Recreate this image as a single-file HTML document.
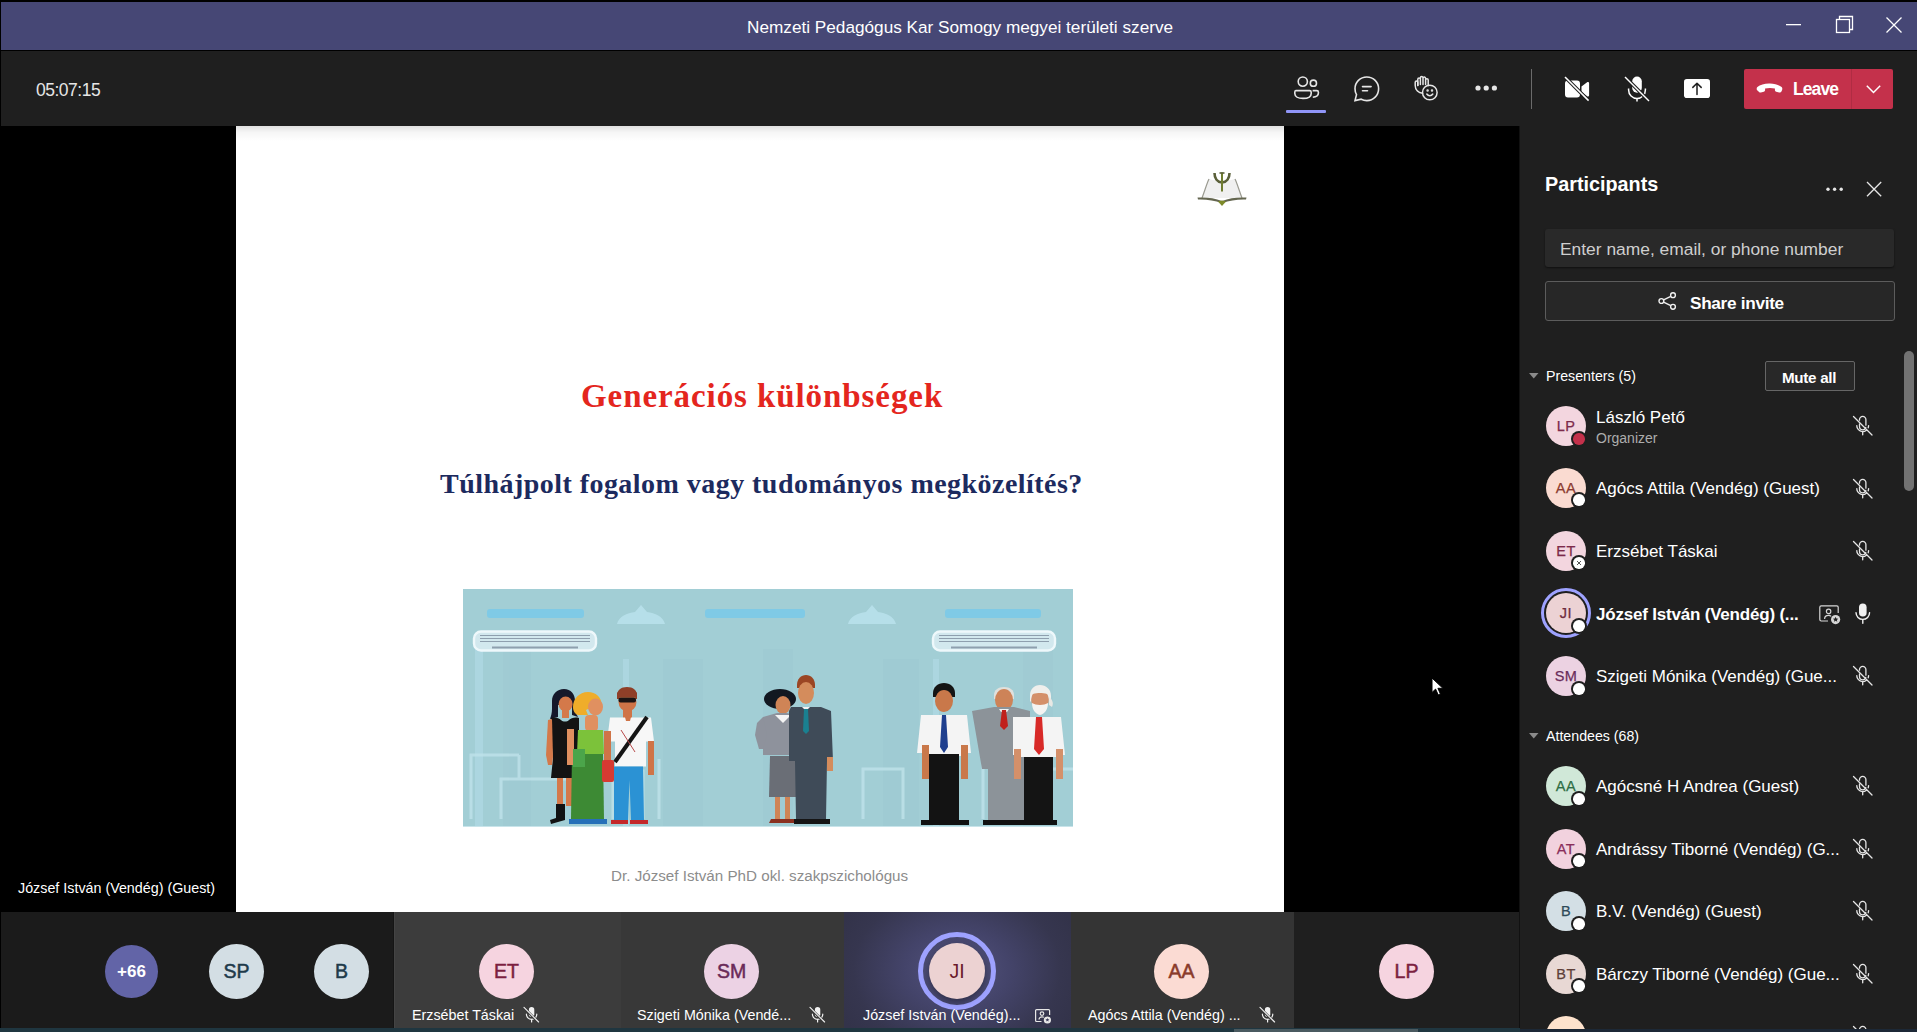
<!DOCTYPE html>
<html><head><meta charset="utf-8">
<style>
*{margin:0;padding:0;box-sizing:border-box}
html,body{width:1917px;height:1032px;overflow:hidden;background:#000;font-family:"Liberation Sans",sans-serif;color:#fff}
.a{position:absolute}
.t{position:absolute;white-space:nowrap;line-height:1}
svg{position:absolute;overflow:visible}
#title{left:1px;top:2px;width:1916px;height:48px;background:#464775}
#tool{left:1px;top:51px;width:1916px;height:75px;background:#1f1f1f}
#video{left:1px;top:126px;width:1518px;height:786px;background:#000}
#slide{left:236px;top:126px;width:1048px;height:786px;background:#fff}
#panel{left:1520px;top:126px;width:397px;height:906px;background:#1f1f1f}
#gallery{left:1px;top:912px;width:1518px;height:116px;background:#1b1b1b}
.av{position:absolute;border-radius:50%;text-align:center;line-height:1}
.pav{width:40px;height:40px;font-size:14.5px;line-height:40px;letter-spacing:0.5px;-webkit-text-stroke:0.25px currentColor}
.st{position:absolute;width:16px;height:16px;border-radius:50%;background:#1f1f1f;margin:-1px 0 0 -1px}
.st i{position:absolute;left:2.2px;top:2.2px;width:11.6px;height:11.6px;border-radius:50%;background:#fff}
.nm{font-size:17px;color:#fff}
.gav{width:55px;height:55px;line-height:55px;font-size:19.5px;-webkit-text-stroke:0.5px currentColor}
.gnm{font-size:14.3px;color:#fff}
</style></head><body>
<!-- title bar -->
<div id="title" class="a"></div>
<div class="t" style="left:747px;top:19px;font-size:17.2px;color:#fff">Nemzeti Pedagógus Kar Somogy megyei területi szerve</div>
<svg style="left:1786px;top:24px" width="16" height="2"><rect x="0" y="0" width="15" height="1.3" fill="#fff"/></svg>
<svg style="left:1835px;top:15px" width="20" height="20" fill="none" stroke="#fff" stroke-width="1.3"><rect x="1.5" y="4.5" width="13" height="13"/><path d="M4.5 4.5V1.5H17.5V14.5H14.5"/></svg>
<svg style="left:1886px;top:17px" width="16" height="16" stroke="#fff" stroke-width="1.3"><path d="M.5 .5L15.5 15.5M15.5 .5L.5 15.5"/></svg>

<!-- toolbar -->
<div id="tool" class="a"></div>
<div class="t" style="left:36px;top:82px;font-size:17.5px;color:#e6e6e6;letter-spacing:-0.5px">05:07:15</div>
<!-- people -->
<svg style="left:1294px;top:76px" width="26" height="24" fill="none" stroke="#e6e6e6" stroke-width="1.6">
 <circle cx="8.8" cy="5.6" r="4.6"/><circle cx="19.4" cy="7.2" r="3.1"/>
 <path d="M2 14.6h13.6a1.6 1.6 0 0 1 1.6 1.6v1.2c0 3-3.2 5-8.2 5s-8.2-2-8.2-5v-1.2a1.6 1.6 0 0 1 1.2-1.6z"/>
 <path d="M18.6 14.6h4.2a1.6 1.6 0 0 1 1.6 1.6v.8c0 2.4-2.4 4-5.6 4.2"/>
</svg>
<div class="a" style="left:1286px;top:110px;width:40px;height:2.5px;background:#9095f7;border-radius:1px"></div>
<!-- chat -->
<svg style="left:1354px;top:76px" width="26" height="26" fill="none" stroke="#e6e6e6" stroke-width="1.6">
 <path d="M12.8 1C19.4 1 24.6 6.2 24.6 12.8S19.4 24.6 12.8 24.6c-2 0-3.9-.5-5.6-1.4L1 24.6l1.5-5.9C1.5 17 1 15 1 12.8 1 6.2 6.2 1 12.8 1z"/>
 <path d="M8.5 10.6h8.6M8.5 14.8h5" stroke-linecap="round"/>
</svg>
<!-- raise hand / react -->
<svg style="left:1414px;top:76px" width="26" height="26" fill="none" stroke="#e6e6e6" stroke-width="1.5" stroke-linecap="round" stroke-linejoin="round">
 <path d="M8.6 17.2C4.6 16.8 1.2 14 1.2 9.6V6.4a1.3 1.3 0 0 1 2.6 0v3"/>
 <path d="M3.8 9.4V3.2a1.3 1.3 0 0 1 2.6 0v5.2V1.9a1.3 1.3 0 0 1 2.6 0v6.5V2.4a1.3 1.3 0 0 1 2.6 0v6V4a1.3 1.3 0 0 1 2.6 0v5.6"/>
 <circle cx="15.8" cy="16.5" r="7.3"/>
 <path d="M12.8 18c.8 1.2 1.8 1.8 3 1.8s2.2-.6 3-1.8"/>
 <circle cx="13.6" cy="14.6" r=".5" fill="#e6e6e6"/><circle cx="18" cy="14.6" r=".5" fill="#e6e6e6"/>
</svg>
<!-- more -->
<svg style="left:1475px;top:85px" width="24" height="6" fill="#e6e6e6"><circle cx="3" cy="3" r="2.6"/><circle cx="11.2" cy="3" r="2.6"/><circle cx="19.4" cy="3" r="2.6"/></svg>
<div class="a" style="left:1531px;top:69px;width:1px;height:40px;background:#6b6b6b"></div>
<!-- camera off -->
<svg style="left:1564px;top:76px" width="27" height="26">
 <path d="M1 7.5a3 3 0 0 1 3-3h9a3 3 0 0 1 3 3v11a3 3 0 0 1-3 3H4a3 3 0 0 1-3-3z" fill="#fff"/>
 <path d="M17.5 10.5l5.6-4.2c.8-.6 2-.1 2 1v12c0 1.1-1.2 1.6-2 1L17.5 16z" fill="#fff"/>
 <path d="M.8 .8L24.4 24.4" stroke="#1f1f1f" stroke-width="3.6"/>
 <path d="M1 1L24.6 24.6" stroke="#fff" stroke-width="1.5"/>
</svg>
<!-- mic off -->
<svg style="left:1624px;top:76px" width="27" height="26">
 <rect x="8.2" y=".5" width="9.6" height="16.2" rx="4.8" fill="#fff"/>
 <path d="M4.6 12.5v1.6a8.4 8.4 0 0 0 16.8 0v-1.6" fill="none" stroke="#fff" stroke-width="1.5"/>
 <path d="M13 22.4v3.2" stroke="#fff" stroke-width="1.5"/>
 <path d="M.8 .8L24.8 24.8" stroke="#1f1f1f" stroke-width="3.6"/>
 <path d="M1 1L25 25" stroke="#fff" stroke-width="1.5"/>
</svg>
<!-- share -->
<svg style="left:1684px;top:79px" width="26" height="20">
 <rect x="0" y="0" width="26" height="19" rx="2.8" fill="#fff"/>
 <path d="M13 15.4V4.4M8.8 8.4L13 4.2l4.2 4.2" fill="none" stroke="#1f1f1f" stroke-width="1.5" stroke-linecap="round" stroke-linejoin="round"/>
</svg>
<!-- leave -->
<div class="a" style="left:1744px;top:69px;width:149px;height:40px;background:#c4314b;border-radius:2px"></div>
<div class="a" style="left:1851px;top:69px;width:1px;height:40px;background:#b02c43"></div>
<svg style="left:1757px;top:83px" width="26" height="11">
 <path d="M13 .5c4.6 0 9 1.4 11.6 3.6.8.7.9 1.8.5 2.8l-.7 1.5c-.4.9-1.4 1.3-2.3 1.1l-2.9-.7c-.8-.2-1.3-.9-1.3-1.7V5.6c-1.6-.5-3.2-.7-4.9-.7s-3.3.2-4.9.7v1.5c0 .8-.5 1.5-1.3 1.7l-2.9.7c-.9.2-1.9-.2-2.3-1.1L-.1 6.9c-.4-1-.3-2.1.5-2.8C3 1.9 7.4.5 12 .5z" fill="#fff"/>
</svg>
<div class="t" style="left:1793px;top:81px;font-size:17.5px;font-weight:bold;color:#fff;letter-spacing:-0.9px">Leave</div>
<svg style="left:1866px;top:85px" width="15" height="9" fill="none" stroke="#fff" stroke-width="1.5"><path d="M.8 .8L7.5 7.5L14.2 .8"/></svg>

<!-- video stage -->
<div id="video" class="a"></div>
<div id="slide" class="a"></div>
<div class="a" style="left:236px;top:126px;width:1048px;height:15px;background:linear-gradient(rgba(0,0,0,.12),rgba(0,0,0,.04) 40%,rgba(0,0,0,0))"></div>
<div class="a" style="left:1520px;top:126px;width:397px;height:3px;background:#1b1b1b"></div>
<!-- logo -->
<svg style="left:1196px;top:168px" width="52" height="42">
 <path d="M6 30C9 22 11 15 13 11c4 1 8 2 13 2s9-1 13-2c2 4 4 11 7 19z" fill="#f0f0f0"/>
 <path d="M6 30C9 22 11 15 13 11" fill="none" stroke="#9a9a90" stroke-width="1.2"/>
 <path d="M46 30C43 22 41 15 39 11" fill="none" stroke="#9a9a90" stroke-width="1.2"/>
 <path d="M1.5 29.5c9-.5 17 .5 24.5 3.5 7.5-3 15.5-4 24.5-3.5l-.5 2c-8.5-.3-16 .8-24 3.8-8-3-15.5-4.1-24-3.8z" fill="#646650"/>
 <path d="M22 33.5l4 4.5 4-4.5-4-1z" fill="#7d8a2a"/>
 <path d="M18.5 5c0 5 2.5 9 7.5 9.5M33.5 5c0 5-2.5 9-7.5 9.5" fill="none" stroke="#5b603a" stroke-width="2.6"/>
 <path d="M26 4.5v19" fill="none" stroke="#6f7d30" stroke-width="2"/>
 <path d="M23.5 5h5" fill="none" stroke="#5b603a" stroke-width="1.6"/>
</svg>
<div class="t" style="left:581px;top:380px;font-family:'Liberation Serif',serif;font-weight:bold;font-size:33px;color:#e4261e;letter-spacing:0.92px">Generációs különbségek</div>
<div class="t" style="left:440px;top:470px;font-family:'Liberation Serif',serif;font-weight:bold;font-size:28px;color:#1c2a5e;letter-spacing:0.46px">Túlhájpolt fogalom vagy tudományos megközelítés?</div>
<div class="t" style="left:611px;top:868px;font-size:15.2px;color:#8c8c8c">Dr. József István PhD okl. szakpszichológus</div>
<!-- illustration -->
<svg style="left:463px;top:589px" width="610" height="238">
 <rect x="0" y="0" width="610" height="238" fill="#a2ced5"/>
 <g fill="#9ecad2" opacity=".6"><rect x="40" y="60" width="28" height="178"/><rect x="200" y="70" width="40" height="168"/><rect x="300" y="60" width="30" height="178"/><rect x="420" y="70" width="36" height="168"/><rect x="560" y="60" width="30" height="178"/></g>
 <g fill="#acd6e0"><rect x="12" y="60" width="8" height="178"/><rect x="160" y="70" width="6" height="168"/><rect x="470" y="70" width="6" height="168"/></g>
 <g fill="#7fcae6"><rect x="24" y="20" width="97" height="9" rx="3"/><rect x="242" y="20" width="100" height="9" rx="3"/><rect x="482" y="20" width="96" height="9" rx="3"/></g>
 <g fill="#b6dfe9"><path d="M154 35c2-8 10-11 18-12l6-7 6 7c8 1 16 4 18 12z"/><path d="M385 35c2-8 10-11 18-12l6-7 6 7c8 1 16 4 18 12z"/></g>
 <g fill="#d2e8ee" stroke="#eef8fb" stroke-width="2.4"><rect x="11" y="42.5" width="122" height="19" rx="7"/><rect x="470" y="42.5" width="122" height="19" rx="7"/></g>
 <g stroke="#8e9fae" stroke-width="1.2"><path d="M17 46.5h110M17 49.5h110M17 52.5h110M476 46.5h110M476 49.5h110M476 52.5h110"/></g>
 <g stroke="#8e9fae" stroke-width="2"><path d="M29 58.5h86M488 58.5h86"/></g>
 <!-- chairs -->
 <g fill="none" stroke="#bfe2ea" stroke-width="3" opacity=".8">
  <path d="M8 230v-64h48M38 230v-40h80v40M56 166v24M120 230v-56"/>
  <path d="M150 230v-48h30v48M196 230v-60"/>
  <path d="M400 230v-50h40v50M520 230v-60h50v60M590 180h20"/>
 </g>
 <!-- group 1 -->
 <g>
  <!-- woman black dress -->
  <path d="M101 100c-7 0-12 5-12 12v8c0 4-1 7-2 10l8-2V116h14v10l6 2c-2-3-3-7-3-11v-5c0-7-4-12-11-12z" fill="#15182a"/>
  <ellipse cx="102.6" cy="115" rx="7" ry="7.5" fill="#d4794a"/>
  <rect x="99" y="121" width="7" height="8" fill="#d4794a"/>
  <path d="M88 129c4-1 8 0 10 2 2 2 6 2 8 0 2-2 6-3 10-2l0 20 -2 20 2 20H88l2-20-2-20z" fill="#131313"/>
  <path d="M85 131l4-1 1 38-1 8h-4l-2-10z" fill="#d4794a"/>
  <rect x="94" y="189" width="6" height="28" fill="#d4794a"/><rect x="103" y="189" width="6" height="28" fill="#d4794a"/>
  <path d="M93 215h9v16l-14 4-1-4 6-2z" fill="#121212"/>
  <!-- woman blonde -->
  <path d="M125 103c-9 0-15 7-15 15 0 4 2 7 5 8h10l-2-5c3-2 11-2 13-1l3-4c-1-8-6-13-14-13z" fill="#efad2a"/>
  <ellipse cx="132.5" cy="118" rx="7.5" ry="8.5" fill="#e09060"/>
  <rect x="122" y="126" width="13" height="16" rx="4" fill="#e09060"/>
  <path d="M115 141h25l1 24h-27z" fill="#7cc23a"/>
  <path d="M109 165h31l1 65h-33z" fill="#3d8a34"/>
  <path d="M106 230h38v5h-38z" fill="#2670b8"/>
  <rect x="104" y="140" width="7" height="36" fill="#e09060"/>
  <rect x="110" y="160" width="12" height="18" fill="#4ba54a"/>
  <!-- man sunglasses -->
  <path d="M154 107c0-6 4-9 10-9s10 3 10 9v3h-20z" fill="#8f3f28"/>
  <ellipse cx="164.5" cy="113" rx="9" ry="9.5" fill="#cf7447"/>
  <path d="M154 104c2-3 6-4 10-4s8 1 10 4v4h-20z" fill="#8f3f28"/>
  <rect x="155.5" y="108.5" width="17.5" height="5" rx="2" fill="#1c1414"/>
  <rect x="160" y="121" width="9" height="8" fill="#cf7447"/>
  <path d="M147 128.5h41l3 24h-8v25h-31v-25h-8z" fill="#f7f7f7"/>
  <path d="M162 128h6l-1 4h-4z" fill="#cf7447"/>
  <path d="M184 128l-32 45" stroke="#151515" stroke-width="4"/>
  <path d="M158 141l14 22" stroke="#b84a4a" stroke-width="1"/>
  <rect x="141" y="142" width="7" height="34" fill="#cf7447"/><rect x="185" y="152" width="6" height="34" fill="#cf7447"/>
  <rect x="139" y="171" width="12" height="22" rx="2" fill="#d63a32"/>
  <path d="M151 177.5h29l1 53.5h-13l-1.5-40-1.5 40h-14z" fill="#2b92d4"/>
  <path d="M148 231h17v4h-17zM167 231h18v4h-18z" fill="#c4282a"/>
 </g>
 <!-- group 2 -->
 <g>
  <ellipse cx="317" cy="110" rx="16" ry="10" fill="#121821"/>
  <ellipse cx="320" cy="116" rx="7.5" ry="9" fill="#cf8456"/>
  <path d="M300 128l14-4h10l14 4 4 38h-42z" fill="#8e929c"/>
  <path d="M312 126l8 8 8-8z" fill="#f5f5f5"/>
  <path d="M294 134l6-6 4 18-4 14h-4l-4-14z" fill="#8e929c"/>
  <path d="M307 167h27l1 41h-29z" fill="#6a6e76"/>
  <rect x="312" y="208" width="5" height="22" fill="#cf8456"/><rect x="322" y="208" width="5" height="22" fill="#cf8456"/>
  <path d="M308 230h12v4h-14zM320 230h12v4h-12z" fill="#8a3020"/>
  <path d="M334 96c0-6 4-10 9-10s9 4 9 10v3h-18z" fill="#9b4624"/>
  <ellipse cx="343" cy="104" rx="8" ry="11" fill="#d48c5c"/>
  <path d="M328 118h30l10 4 2 50h-6l-1 58h-30l-1-58h-6l0-50z" fill="#3f4b58"/>
  <path d="M339 118h8l-4 4z" fill="#f2f2f2"/><path d="M341 120h4l1 22-3 3-3-3z" fill="#1a8090"/>
  <rect x="364" y="168" width="6" height="14" fill="#d48c5c"/>
  <path d="M331 230h36v5h-36z" fill="#151515"/>
 </g>
 <!-- group 3 -->
 <g>
  <path d="M470 104c0-6 5-10 11-10s11 4 11 10v4h-22z" fill="#141414"/>
  <ellipse cx="481" cy="112" rx="9" ry="11" fill="#c9784a"/>
  <path d="M458 126h46l4 38h-8v3h-38v-3h-8z" fill="#f4f4f4"/>
  <path d="M479 126h4l2 32-4 6-4-6z" fill="#1f3f8e"/>
  <rect x="459" y="156" width="7" height="34" fill="#c9784a"/><rect x="498" y="156" width="7" height="34" fill="#c9784a"/>
  <path d="M466 165h30v66h-30z" fill="#131313"/>
  <path d="M458 231h24v5h-24zM482 231h24v5h-24z" fill="#111"/>
  <path d="M531 106c0-5 4-8 10-8s10 3 10 8v4h-20z" fill="#e0e0dc"/>
  <ellipse cx="541" cy="111" rx="9" ry="11" fill="#cd8358"/>
  <path d="M509 122l22-4h20l16 4 0 58h-4v51h-38v-51h-6z" fill="#8c9399"/>
  <path d="M536 120h10l-2 3h-6z" fill="#f2f2f2"/><path d="M539 121h4l2 16-4 4-4-4z" fill="#c0201c"/>
  <path d="M520 231h42v5h-42z" fill="#111"/>
  <ellipse cx="577" cy="110" rx="9" ry="10.5" fill="#d4906a"/>
  <path d="M567 107c0-7 4-11 10-11s11 4 11 11v5l-2 1c0-4-1-7-2-8-2-1-5-1-7-1s-5 0-7 1c-1 1-2 4-2 8l-1-1z" fill="#efefec"/>
  <path d="M569 114c2 1 5 2 8 2s6-1 8-2c0 6-3 11-8 12-5-1-8-6-8-12z" fill="#f4f4f2"/>
  <path d="M586 108c3 2 5 6 3 10l-3-2z" fill="#e8e8e4"/>
  <path d="M550 128h48l4 38h-6v2h-38v-2h-8z" fill="#f4f4f4"/>
  <path d="M573 128h6l2 32-5 6-5-6z" fill="#d82a28"/>
  <rect x="551" y="160" width="7" height="30" fill="#d4906a"/><rect x="593" y="160" width="7" height="30" fill="#d4906a"/>
  <path d="M561 168h29v63h-29z" fill="#141414"/>
  <path d="M558 231h36v5h-36z" fill="#111"/>
 </g>
 <rect x="0" y="237" width="610" height="1" fill="#c8e4ea"/>
</svg>
<div class="t" style="left:18px;top:881px;font-size:14.3px;color:#fff">József István (Vendég) (Guest)</div>

<svg style="left:1431px;top:677px" width="14" height="20"><path d="M1 1v14.5l3.6-3.4 2.6 5.8 2.2-1-2.5-5.6h5z" fill="#fff" stroke="#000" stroke-width="1"/></svg>
<!-- panel -->
<div id="panel" class="a"></div>
<div class="a" style="left:1519px;top:126px;width:1px;height:906px;background:#111"></div>
<div class="t" style="left:1545px;top:175px;font-size:19.8px;font-weight:bold;color:#fff">Participants</div>
<svg style="left:1826px;top:187px" width="18" height="5" fill="#e6e6e6"><circle cx="2" cy="2.2" r="1.7"/><circle cx="8.6" cy="2.2" r="1.7"/><circle cx="15.2" cy="2.2" r="1.7"/></svg>
<svg style="left:1866px;top:181px" width="16" height="16" stroke="#e6e6e6" stroke-width="1.3"><path d="M1 1L15.2 15.2M15.2 1L1 15.2"/></svg>
<div class="a" style="left:1545px;top:229px;width:349px;height:38px;background:#292929;border-radius:3px;box-shadow:0 1px 2px rgba(0,0,0,.5)"></div>
<div class="t" style="left:1560px;top:241px;font-size:17.4px;color:#cfcfcf">Enter name, email, or phone number</div>
<div class="a" style="left:1545px;top:281px;width:350px;height:40px;background:#272727;border:1px solid #5c5c5c;border-radius:3px"></div>
<svg style="left:1658px;top:292px" width="19" height="18" fill="none" stroke="#f0f0f0" stroke-width="1.4"><circle cx="15" cy="3.2" r="2.4"/><circle cx="3.4" cy="9" r="2.4"/><circle cx="15" cy="14.8" r="2.4"/><path d="M5.6 7.9l7.2-3.6M5.6 10.1l7.2 3.6"/></svg>
<div class="t" style="left:1690px;top:295px;font-size:17.2px;font-weight:bold;color:#fff;letter-spacing:-0.3px">Share invite</div>
<!-- scrollbar -->
<div class="a" style="left:1904px;top:351px;width:10px;height:140px;background:#727272;border-radius:5px"></div>
<!-- presenters -->
<svg style="left:1529px;top:373px" width="10" height="6" fill="#8a8a8a"><path d="M0 0h9.5L4.75 5.5z"/></svg>
<div class="t" style="left:1546px;top:369px;font-size:14.2px;color:#fff">Presenters (5)</div>
<div class="a" style="left:1765px;top:361px;width:90px;height:30px;border:1px solid #666;border-radius:2px;background:#282828"></div>
<div class="t" style="left:1782px;top:370px;font-size:15.2px;font-weight:bold;color:#fff;letter-spacing:-0.3px">Mute all</div>

<div class="av pav" style="left:1546px;top:406px;background:#f3d6df;color:#7d2a4a">LP</div>
<div class="st" style="left:1572px;top:432px"><i style="background:#c4314b"></i></div>
<div class="t nm" style="left:1596px;top:409px">László Pető</div>
<div class="t" style="left:1596px;top:431px;font-size:14px;color:#adadad">Organizer</div>

<div class="av pav" style="left:1546px;top:468px;background:#fadbd1;color:#8d3b30">AA</div>
<div class="st" style="left:1572px;top:493px"><i></i></div>
<div class="t nm" style="left:1596px;top:480px">Agócs Attila (Vendég) (Guest)</div>

<div class="av pav" style="left:1546px;top:531px;background:#f3d6df;color:#7d2a4a">ET</div>
<div class="st" style="left:1572px;top:556px"><i style="background:#fff"></i></div>
<svg style="left:1575px;top:559px" width="8" height="8" stroke="#555" stroke-width="1"><path d="M2 2L6 6M6 2L2 6"/></svg>
<div class="t nm" style="left:1596px;top:543px">Erzsébet Táskai</div>

<div class="a" style="left:1541px;top:588px;width:50px;height:50px;border-radius:50%;border:3px solid #9ea2ff"></div>
<div class="av pav" style="left:1546px;top:593px;background:#ecd2d4;color:#6e2c3c">JI</div>
<div class="st" style="left:1572px;top:619px"><i></i></div>
<div class="t nm" style="left:1596px;top:606px;font-weight:bold;letter-spacing:-0.2px">József István (Vendég) (...</div>

<div class="av pav" style="left:1546px;top:656px;background:#ecd2e2;color:#6a2c5a">SM</div>
<div class="st" style="left:1572px;top:682px"><i></i></div>
<div class="t nm" style="left:1596px;top:668px">Szigeti Mónika (Vendég) (Gue...</div>

<svg style="left:1529px;top:733px" width="10" height="6" fill="#8a8a8a"><path d="M0 0h9.5L4.75 5.5z"/></svg>
<div class="t" style="left:1546px;top:729px;font-size:14.2px;color:#fff">Attendees (68)</div>

<div class="av pav" style="left:1546px;top:766px;background:#d0e8d8;color:#2e6e45">AA</div>
<div class="st" style="left:1572px;top:792px"><i></i></div>
<div class="t nm" style="left:1596px;top:778px">Agócsné H Andrea (Guest)</div>

<div class="av pav" style="left:1546px;top:829px;background:#f2d2de;color:#8a2e5a">AT</div>
<div class="st" style="left:1572px;top:854px"><i></i></div>
<div class="t nm" style="left:1596px;top:841px">Andrássy Tiborné (Vendég) (G...</div>

<div class="av pav" style="left:1546px;top:891px;background:#d3dfe5;color:#2e4a58">B</div>
<div class="st" style="left:1572px;top:917px"><i></i></div>
<div class="t nm" style="left:1596px;top:903px">B.V. (Vendég) (Guest)</div>

<div class="av pav" style="left:1546px;top:954px;background:#e8d8d4;color:#5e4038">BT</div>
<div class="st" style="left:1572px;top:979px"><i></i></div>
<div class="t nm" style="left:1596px;top:966px">Bárczy Tiborné (Vendég) (Gue...</div>

<div class="av pav" style="left:1546px;top:1016px;background:#fde2cc;color:#8a4a2a"></div>

<!-- mic icons -->
<svg width="0" height="0"><defs>
 <g id="micoff" fill="none" stroke="#e6e6e6" stroke-width="1.3" stroke-linecap="round">
  <path d="M7.5 5.2V4.6a3.2 3.2 0 0 1 6.4 0v5.6M13.8 12.4c-.4 1.4-1.7 2.4-3.1 2.4-1.8 0-3.2-1.4-3.2-3.2V9"/>
  <path d="M4.8 10.6a5.9 5.9 0 0 0 9.6 4.6M16.6 10.6c0 .8-.2 1.5-.4 2.2"/>
  <path d="M10.7 16.6v3.2"/>
  <path d="M1.5 1.5L20 20"/>
 </g>
</defs></svg>
<svg style="left:1852px;top:415px" width="22" height="22"><use href="#micoff"/></svg>
<svg style="left:1852px;top:478px" width="22" height="22"><use href="#micoff"/></svg>
<svg style="left:1852px;top:540px" width="22" height="22"><use href="#micoff"/></svg>
<svg style="left:1852px;top:665px" width="22" height="22"><use href="#micoff"/></svg>
<svg style="left:1852px;top:775px" width="22" height="22"><use href="#micoff"/></svg>
<svg style="left:1852px;top:838px" width="22" height="22"><use href="#micoff"/></svg>
<svg style="left:1852px;top:900px" width="22" height="22"><use href="#micoff"/></svg>
<svg style="left:1852px;top:963px" width="22" height="22"><use href="#micoff"/></svg>
<svg style="left:1852px;top:1025px" width="22" height="22"><use href="#micoff"/></svg>
<!-- JI row: screen share + mic on -->
<svg style="left:1819px;top:605px" width="23" height="20" fill="none" stroke="#d6d6d6" stroke-width="1.2">
 <path d="M9 16H2.2A1.4 1.4 0 0 1 .8 14.6V2.2A1.4 1.4 0 0 1 2.2.8h15.6a1.4 1.4 0 0 1 1.4 1.4V8"/>
 <circle cx="9.6" cy="6.4" r="2.2"/><path d="M5.6 14c0-2.2 1.8-3.6 4-3.6 1 0 1.8.3 2.4.8"/>
 <circle cx="16.6" cy="14.6" r="4.6" fill="#d6d6d6" stroke="none"/>
 <path d="M16.6 11.8l.8 1.8 1.9.1-1.5 1.2.5 1.9-1.7-1-1.7 1 .5-1.9-1.5-1.2 1.9-.1z" fill="#1f1f1f" stroke="none"/>
</svg>
<svg style="left:1855px;top:603px" width="16" height="21">
 <rect x="4" y=".5" width="7.6" height="13" rx="3.8" fill="#f0f0f0"/>
 <path d="M1 9.6a6.8 6.8 0 0 0 13.6 0" fill="none" stroke="#f0f0f0" stroke-width="1.4" stroke-linecap="round"/>
 <path d="M7.8 16.6v3.6" stroke="#f0f0f0" stroke-width="1.4" stroke-linecap="round"/>
</svg>

<!-- gallery -->
<div id="gallery" class="a"></div>
<div class="a" style="left:394px;top:912px;width:227px;height:116px;background:#3c3c3c;border-left:1px solid #444"></div>
<div class="a" style="left:621px;top:912px;width:223px;height:116px;background:#383838"></div>
<div class="a" style="left:393px;top:912px;width:1px;height:116px;background:#151515"></div>
<div class="a" style="left:844px;top:912px;width:227px;height:116px;background:radial-gradient(ellipse 130px 100px at 113px 58px,#54547e 0%,#44446a 40%,#36364f 80%,#33334a 100%)"></div>
<div class="a" style="left:1071px;top:912px;width:223px;height:116px;background:#343434"></div>
<div class="a" style="left:1294px;top:912px;width:225px;height:116px;background:#1f1f1f"></div>

<div class="av" style="left:105px;top:945px;width:53px;height:53px;line-height:53px;background:#6264a7;color:#fff;font-size:17px;font-weight:bold">+66</div>
<div class="av gav" style="left:209px;top:944px;background:#d3dee4;color:#1e3a4a">SP</div>
<div class="av gav" style="left:314px;top:944px;background:#d3dee4;color:#1e3a4a">B</div>

<div class="av gav" style="left:479px;top:944px;background:#f6d4e0;color:#7c1f40">ET</div>
<div class="t gnm" style="left:412px;top:1008px">Erzsébet Táskai</div>
<div class="av gav" style="left:704px;top:944px;background:#ecd2e4;color:#6a2a58">SM</div>
<div class="t gnm" style="left:637px;top:1008px">Szigeti Mónika (Vendé...</div>
<div class="a" style="left:918px;top:932px;width:78px;height:78px;border-radius:50%;border:5px solid #9ea2ff"></div>
<div class="av gav" style="left:929px;top:943px;width:56px;height:56px;line-height:56px;background:#ecd2d2;color:#6a1a2a;-webkit-text-stroke:0;box-shadow:0 3px 6px rgba(0,0,0,.35)">JI</div>
<div class="t gnm" style="left:863px;top:1008px">József István (Vendég)...</div>
<div class="av gav" style="left:1154px;top:944px;background:#fbdbd3;color:#8a3a2a">AA</div>
<div class="t gnm" style="left:1088px;top:1008px">Agócs Attila (Vendég) ...</div>
<div class="av gav" style="left:1379px;top:944px;background:#f6d4e0;color:#7c1f40">LP</div>

<svg width="0" height="0"><defs>
 <g id="gmicoff">
  <rect x="4.9" y="1" width="5.4" height="10" rx="2.7" fill="#f2f2f2"/>
  <path d="M2.4 8.2a5.2 5.2 0 0 0 10.4 0" fill="none" stroke="#f2f2f2" stroke-width="1.2" stroke-linecap="round"/>
  <path d="M7.6 13.4v2.6" stroke="#f2f2f2" stroke-width="1.2" stroke-linecap="round"/>
  <path d="M.6 2.4L14.4 16.2" stroke="#3a3a3a" stroke-width="2.6"/>
  <path d="M0 1.4L14.6 16" stroke="#f2f2f2" stroke-width="1.1" stroke-linecap="round"/>
 </g>
</defs></svg>
<svg style="left:524px;top:1006px" width="16" height="16"><use href="#gmicoff"/></svg>
<svg style="left:810px;top:1006px" width="16" height="16"><use href="#gmicoff"/></svg>
<svg style="left:1260px;top:1006px" width="16" height="16"><use href="#gmicoff"/></svg>
<svg style="left:1035px;top:1009px" width="17" height="15" fill="none" stroke="#e6e6e6" stroke-width="1.2">
 <path d="M6.5 12.5H1.6A1 1 0 0 1 .6 11.5V1.6A1 1 0 0 1 1.6.6h12a1 1 0 0 1 1 1V6"/>
 <circle cx="7" cy="4.6" r="1.8"/><path d="M4 10.6c0-1.6 1.3-2.8 3-2.8.8 0 1.4.2 1.9.6"/>
 <circle cx="12.4" cy="11" r="3.6" fill="#e6e6e6" stroke="none"/>
 <path d="M12.4 8.9l.6 1.3 1.4.1-1.1.9.4 1.4-1.3-.8-1.3.8.4-1.4-1.1-.9 1.4-.1z" fill="#3a3a5a" stroke="none"/>
</svg>


<div class="a" style="left:0;top:1028px;width:1520px;height:4px;background:#1f3640"></div>
<div class="a" style="left:1520px;top:1029px;width:397px;height:3px;background:#1c2836"></div>
<div class="a" style="left:1234px;top:1029px;width:184px;height:3px;background:#4a5a60"></div>
</body></html>
